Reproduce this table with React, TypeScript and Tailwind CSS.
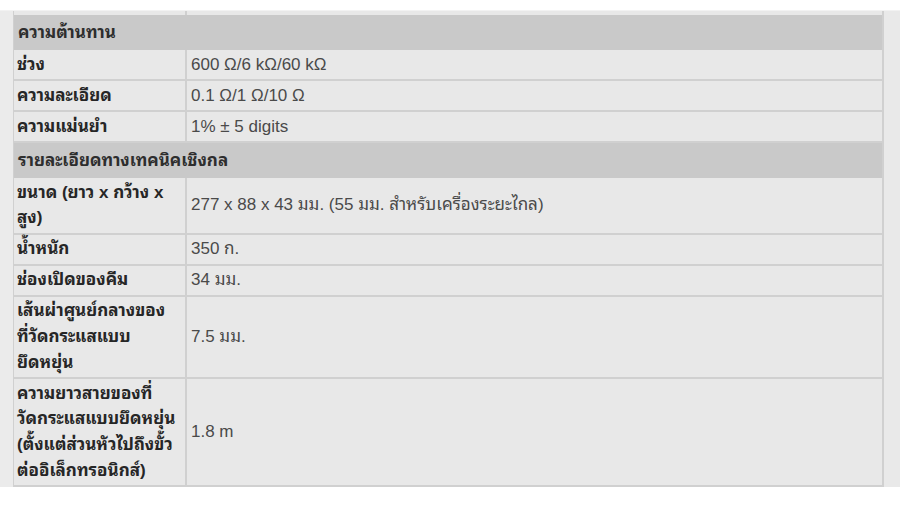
import React from "react";

type Row =
  | { kind: "head"; text: string }
  | { kind: "row"; label: string[]; value: string };

const rows: Row[] = [
  { kind: "head", text: "ความต้านทาน" },
  { kind: "row", label: ["ช่วง"], value: "600 Ω/6 kΩ/60 kΩ" },
  { kind: "row", label: ["ความละเอียด"], value: "0.1 Ω/1 Ω/10 Ω" },
  { kind: "row", label: ["ความแม่นยำ"], value: "1% ± 5 digits" },
  { kind: "head", text: "รายละเอียดทางเทคนิคเชิงกล" },
  {
    kind: "row",
    label: ["ขนาด (ยาว x กว้าง x", "สูง)"],
    value: "277 x 88 x 43 มม. (55 มม. สำหรับเครื่องระยะไกล)",
  },
  { kind: "row", label: ["น้ำหนัก"], value: "350 ก." },
  { kind: "row", label: ["ช่องเปิดของคีม"], value: "34 มม." },
  {
    kind: "row",
    label: ["เส้นผ่าศูนย์กลางของ", "ที่วัดกระแสแบบ", "ยึดหยุ่น"],
    value: "7.5 มม.",
  },
  {
    kind: "row",
    label: ["ความยาวสายของที่", "วัดกระแสแบบยึดหยุ่น", "(ตั้งแต่ส่วนหัวไปถึงขั้ว", "ต่ออิเล็กทรอนิกส์)"],
    value: "1.8 m",
  },
];

export default function App() {
  return (
    <div className="w-[900px] h-[505px] bg-white overflow-hidden font-['Liberation_Sans','Noto_Sans_Thai_Looped','Noto_Sans_Thai',sans-serif]">
      <div className="mt-[10px] flex bg-[#ebebeb] border-t border-[#f2f2f2]">
        <div className="w-[13px] shrink-0" />
        <div className="w-[871px] shrink-0 border-l border-r-2 border-[#d0d0d0]">
          <div className="flex h-[4px] bg-[#e8e8e8]">
            <div className="w-[173px] border-r-2 border-[#d0d0d0]" />
            <div className="flex-1" />
          </div>
          {rows.map((r, i) =>
            r.kind === "head" ? (
              <div
                key={i}
                className="bg-[#c9c9c9] px-[4px] py-[4.65px] text-[17px] leading-[25.7px] font-bold text-[#2e2e2e]"
              >
                {r.text}
              </div>
            ) : (
              <div
                key={i}
                className="flex bg-[#e8e8e8] border-b-2 border-[#d0d0d0] text-[17px] leading-[25.7px]"
              >
                <div className="w-[173px] shrink-0 border-r-2 border-[#d0d0d0] px-[3px] py-[1.65px] font-bold text-[#262626]">
                  {r.label.map((l, j) => (
                    <div key={j} className="whitespace-nowrap">
                      {l}
                    </div>
                  ))}
                </div>
                <div className="flex-1 flex items-center px-[4px] py-[1.65px] text-[#4a4a4a]">
                  {r.value}
                </div>
              </div>
            )
          )}
        </div>
        <div className="flex-1 bg-[#e9e9e9]" />
      </div>
    </div>
  );
}
